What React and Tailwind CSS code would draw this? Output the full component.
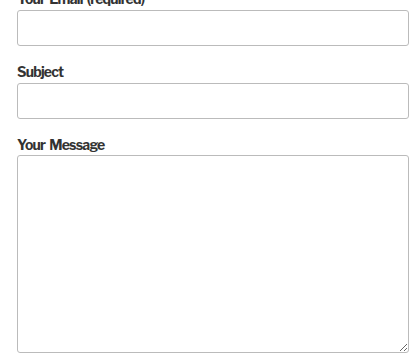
import React from 'react';

function Field({ label, children }) {
  return (
    <div className="mb-4">
      <label className="block text-[14px] leading-5 font-bold tracking-[-0.8px] [word-spacing:2px] text-[#333] mb-px">{label}</label>
      {children}
    </div>
  );
}

export default function App() {
  return (
    <div className="w-[420px] h-[360px] overflow-hidden bg-white" style={{ fontFamily: "'Libre Franklin', Roboto, 'Liberation Sans', sans-serif" }}>
      <form className="-mt-[11px] pl-[17px] pr-[11px]">
        <Field label="Your Email (required)">
          <input type="email" className="block w-full h-9 border border-[#bbb] rounded-[3px] bg-white" />
        </Field>
        <Field label="Subject">
          <input type="text" className="block w-full h-9 border border-[#bbb] rounded-[3px] bg-white" />
        </Field>
        <div>
          <label className="block text-[14px] leading-5 font-bold tracking-[-0.8px] [word-spacing:2px] text-[#333]">Your Message</label>
          <textarea className="block w-full h-[198px] border border-[#bbb] rounded-[3px] bg-white resize" />
        </div>
      </form>
    </div>
  );
}
